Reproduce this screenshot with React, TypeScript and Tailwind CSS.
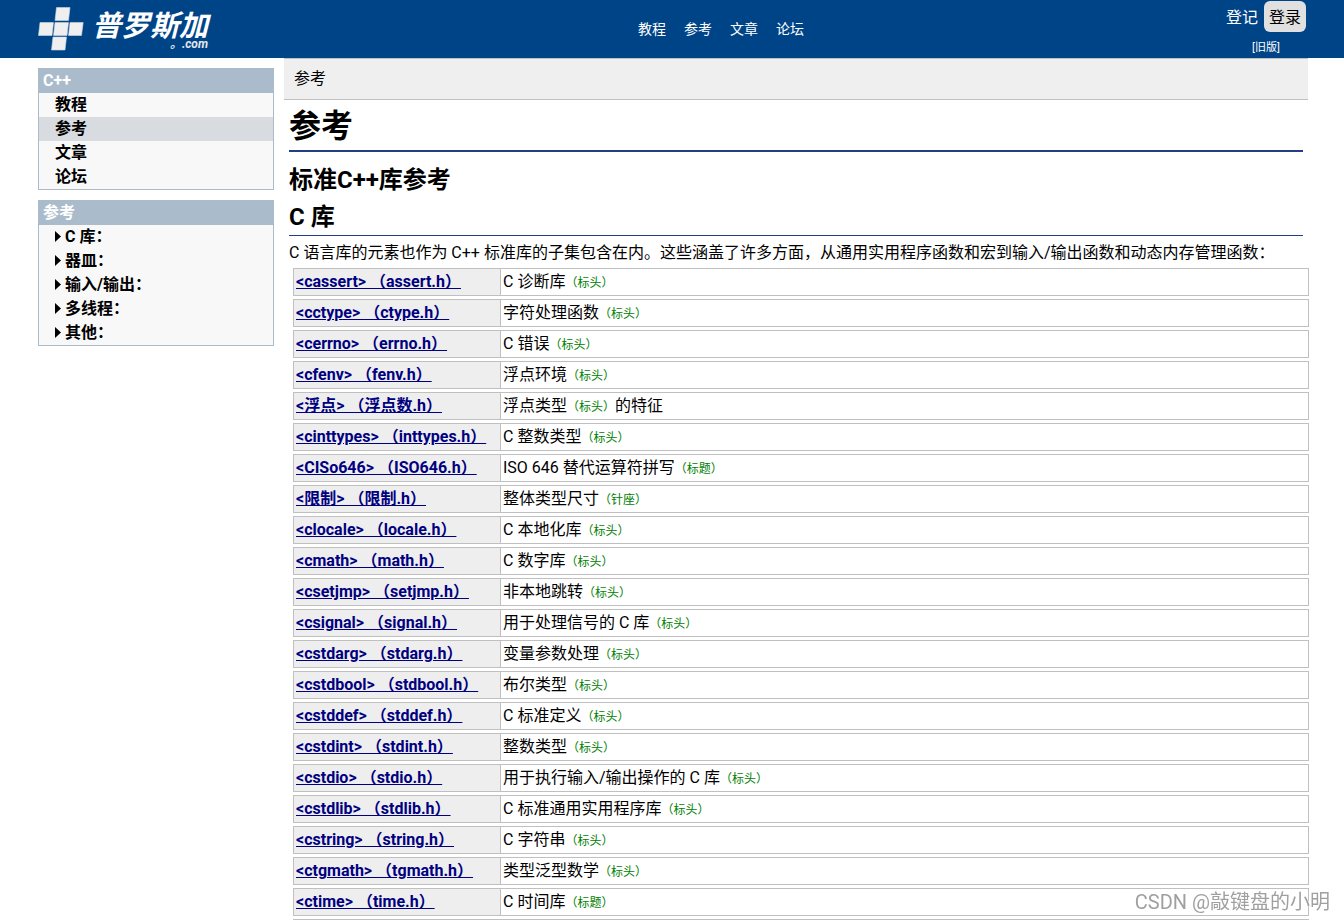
import React from 'react';

const topLinks = ['教程', '参考', '文章', '论坛'];

const sections = ['C 库：', '器皿：', '输入/输出：', '多线程：', '其他：'];

const headers = [
  { name: '<cassert> （assert.h）', text: 'C 诊断库', tag: '（标头）' },
  { name: '<cctype> （ctype.h）', text: '字符处理函数', tag: '（标头）' },
  { name: '<cerrno> （errno.h）', text: 'C 错误', tag: '（标头）' },
  { name: '<cfenv> （fenv.h）', text: '浮点环境', tag: '（标头）' },
  { name: '<浮点> （浮点数.h）', text: '浮点类型', tag: '（标头）', rest: '的特征' },
  { name: '<cinttypes> （inttypes.h）', text: 'C 整数类型', tag: '（标头）' },
  { name: '<CISo646> （ISO646.h）', text: 'ISO 646 替代运算符拼写', tag: '（标题）' },
  { name: '<限制> （限制.h）', text: '整体类型尺寸', tag: '（针座）' },
  { name: '<clocale> （locale.h）', text: 'C 本地化库', tag: '（标头）' },
  { name: '<cmath> （math.h）', text: 'C 数字库', tag: '（标头）' },
  { name: '<csetjmp> （setjmp.h）', text: '非本地跳转', tag: '（标头）' },
  { name: '<csignal> （signal.h）', text: '用于处理信号的 C 库', tag: '（标头）' },
  { name: '<cstdarg> （stdarg.h）', text: '变量参数处理', tag: '（标头）' },
  { name: '<cstdbool> （stdbool.h）', text: '布尔类型', tag: '（标头）' },
  { name: '<cstddef> （stddef.h）', text: 'C 标准定义', tag: '（标头）' },
  { name: '<cstdint> （stdint.h）', text: '整数类型', tag: '（标头）' },
  { name: '<cstdio> （stdio.h）', text: '用于执行输入/输出操作的 C 库', tag: '（标头）' },
  { name: '<cstdlib> （stdlib.h）', text: 'C 标准通用实用程序库', tag: '（标头）' },
  { name: '<cstring> （string.h）', text: 'C 字符串', tag: '（标头）' },
  { name: '<ctgmath> （tgmath.h）', text: '类型泛型数学', tag: '（标头）' },
  { name: '<ctime> （time.h）', text: 'C 时间库', tag: '（标题）' },
  { name: '', text: '', tag: '' },
];

function Logo() {
  return (
    <a href="#" className="flex items-center gap-2 text-white">
      <svg width="46" height="44" viewBox="0 0 46 44" fill="#efefef" stroke="#c9d6e4" strokeWidth="0.6">
        <path d="M18.5 0.5H32L30.5 13.5H17Z" />
        <path d="M2 15.5H15.5L14 28.5H0.5Z" />
        <path d="M17 15.5H30.5L29 28.5H15.5Z" />
        <path d="M32 15.5H45.2L43.5 28.5H30.5Z" />
        <path d="M15 30H28.5L27 43H13.5Z" />
      </svg>
      <span className="flex flex-col items-end pt-1.5 font-bold italic">
        <span className="text-[29px] leading-6">普罗斯加</span>
        <span className="text-xs leading-3 text-gray-200">。.com</span>
      </span>
    </a>
  );
}

function Header() {
  return (
    <header className="flex h-[58px] items-center justify-between bg-[#004488] px-[38px] text-white">
      <Logo />
      <nav className="flex gap-[18px] pl-2 text-sm">
        {topLinks.map((link) => (
          <a key={link} href="#">
            {link}
          </a>
        ))}
      </nav>
      <div className="flex h-full flex-col items-center pt-px">
        <div className="flex h-[31px] items-center gap-1.5">
          <a href="#" className="pt-0.5">
            登记
          </a>
          <button type="button" className="h-[31px] rounded-md bg-[#e0e0e0] px-[5px] pt-0.5 text-black">
            登录
          </button>
        </div>
        <a href="#" className="mt-2 text-[11px] leading-4">
          [旧版]
        </a>
      </div>
    </header>
  );
}

function SideBox({ title, children }: { title: string; children: React.ReactNode }) {
  return (
    <section className="border border-[#aabbcc] bg-[#f8f8f8] font-bold">
      <h3 className="h-6 bg-[#aabbcc] pl-1 leading-6 text-white">{title}</h3>
      <ul>{children}</ul>
    </section>
  );
}

function Sidebar() {
  return (
    <aside className="flex w-[236px] shrink-0 flex-col gap-2.5 pt-2.5">
      <SideBox title="C++">
        {topLinks.map((link) => (
          <li key={link} className={link === '参考' ? 'bg-[#d8dbe0]' : ''}>
            <a href="#" className="block pl-4 leading-6">
              {link}
            </a>
          </li>
        ))}
      </SideBox>
      <SideBox title="参考">
        {sections.map((section) => (
          <li key={section}>
            <button type="button" className="flex w-full items-center gap-1 pl-4 leading-6">
              <svg width="6" height="12" viewBox="0 0 6 12">
                <path d="M0 0L6 5.5L0 11Z" />
              </svg>
              {section}
            </button>
          </li>
        ))}
      </SideBox>
    </aside>
  );
}

function HeaderTable() {
  return (
    <div className="-mr-1.5 ml-1">
      <table className="w-full border-separate border-spacing-x-0 border-spacing-y-[3px]">
        <tbody>
          {headers.map((header) => (
            <tr key={header.name}>
              <th className="h-7 w-52 border border-[#c0c0c0] bg-[#eeeeee] px-0.5 py-0 text-left leading-6">
                <a href="#" className="text-[#000080] underline">
                  {header.name}
                </a>
              </th>
              <td className="h-7 border border-l-0 border-[#c0c0c0] px-0.5 py-0 leading-6">
                {header.text}
                <span className="text-xs text-[#008000]">{header.tag}</span>
                {header.rest}
              </td>
            </tr>
          ))}
        </tbody>
      </table>
    </div>
  );
}

function App() {
  return (
    <div className="h-screen overflow-hidden bg-white font-[Roboto,'Noto_Sans_CJK_SC',sans-serif] text-base text-black">
      <Header />
      <div className="flex gap-2.5 pr-9 pl-[38px]">
        <Sidebar />
        <main className="min-w-0 flex-1">
          <div className="h-[42px] border-y border-[#c0c0c0] bg-[#efefef] pl-2.5 leading-10">参考</div>
          <div className="px-[5px]">
            <h1 className="h-[52px] border-b-2 border-[#204080] text-[32px] leading-[52px] font-bold">参考</h1>
            <h2 className="mt-2.5 text-2xl leading-9 font-bold">标准C++库参考</h2>
            <h2 className="h-[38px] border-b border-[#204080] text-2xl leading-[38px] font-bold">C 库</h2>
            <p className="mt-1 leading-[25px]">
              C 语言库的元素也作为 C++ 标准库的子集包含在内。这些涵盖了许多方面，从通用实用程序函数和宏到输入/输出函数和动态内存管理函数：
            </p>
            <HeaderTable />
          </div>
        </main>
      </div>
      <div className="pointer-events-none fixed right-3.5 bottom-1 text-xl leading-7 text-[#a0a0a0] [text-shadow:1px_1px_0_#ffffff]">
        CSDN @敲键盘的小明
      </div>
    </div>
  );
}

export default App;
